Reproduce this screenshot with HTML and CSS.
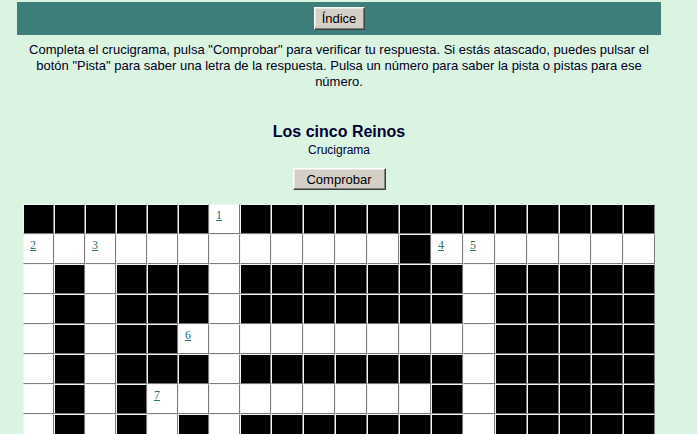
FILE: index.html
```html
<!DOCTYPE html>
<html lang="es">
<head>
<meta charset="utf-8">
<title>Los cinco Reinos</title>
<link rel="stylesheet" href="styles.css">
</head>
<body>
<div class="page">
  <div class="navbar">
    <button class="btn btn-nav" type="button">Índice</button>
  </div>
  <p class="instructions">Completa el crucigrama, pulsa "Comprobar" para verificar tu respuesta. Si estás atascado, puedes pulsar el botón "Pista" para saber una letra de la respuesta. Pulsa un número para saber la pista o pistas para ese número.</p>
  <h2 class="title">Los cinco Reinos</h2>
  <h3 class="subtitle">Crucigrama</h3>
  <div class="actions">
    <button class="btn btn-check" type="button">Comprobar</button>
  </div>
  <table class="grid">
    <colgroup>
      <col class="narrow"><col class="narrow"><col class="narrow"><col class="narrow"><col class="narrow"><col class="narrow"><col class="narrow"><col class="narrow">
      <col class="wide"><col class="wide"><col class="wide"><col class="wide"><col class="wide"><col class="wide"><col class="wide"><col class="wide"><col class="wide"><col class="wide"><col class="wide"><col class="wide">
    </colgroup>
    <tr>
      <td class="b"></td><td class="b"></td><td class="b"></td><td class="b"></td><td class="b"></td><td class="b"></td>
      <td class="w"><a href="#">1</a></td>
      <td class="b"></td><td class="b"></td><td class="b"></td><td class="b"></td><td class="b"></td><td class="b"></td><td class="b"></td><td class="b"></td><td class="b"></td><td class="b"></td><td class="b"></td><td class="b"></td><td class="b"></td>
    </tr>
    <tr>
      <td class="w"><a href="#">2</a></td><td class="w"></td><td class="w"><a href="#">3</a></td>
      <td class="w"></td><td class="w"></td><td class="w"></td><td class="w"></td><td class="w"></td><td class="w"></td><td class="w"></td><td class="w"></td><td class="w"></td>
      <td class="b"></td>
      <td class="w"><a href="#">4</a></td><td class="w"><a href="#">5</a></td>
      <td class="w"></td><td class="w"></td><td class="w"></td><td class="w"></td><td class="w"></td>
    </tr>
    <tr>
      <td class="w"></td><td class="b"></td><td class="w"></td><td class="b"></td><td class="b"></td><td class="b"></td><td class="w"></td>
      <td class="b"></td><td class="b"></td><td class="b"></td><td class="b"></td><td class="b"></td><td class="b"></td><td class="b"></td>
      <td class="w"></td>
      <td class="b"></td><td class="b"></td><td class="b"></td><td class="b"></td><td class="b"></td>
    </tr>
    <tr>
      <td class="w"></td><td class="b"></td><td class="w"></td><td class="b"></td><td class="b"></td><td class="b"></td><td class="w"></td>
      <td class="b"></td><td class="b"></td><td class="b"></td><td class="b"></td><td class="b"></td><td class="b"></td><td class="b"></td>
      <td class="w"></td>
      <td class="b"></td><td class="b"></td><td class="b"></td><td class="b"></td><td class="b"></td>
    </tr>
    <tr>
      <td class="w"></td><td class="b"></td><td class="w"></td><td class="b"></td><td class="b"></td>
      <td class="w"><a href="#">6</a></td>
      <td class="w"></td><td class="w"></td><td class="w"></td><td class="w"></td><td class="w"></td><td class="w"></td><td class="w"></td><td class="w"></td><td class="w"></td>
      <td class="b"></td><td class="b"></td><td class="b"></td><td class="b"></td><td class="b"></td>
    </tr>
    <tr>
      <td class="w"></td><td class="b"></td><td class="w"></td><td class="b"></td><td class="b"></td><td class="b"></td><td class="w"></td>
      <td class="b"></td><td class="b"></td><td class="b"></td><td class="b"></td><td class="b"></td><td class="b"></td><td class="b"></td>
      <td class="w"></td>
      <td class="b"></td><td class="b"></td><td class="b"></td><td class="b"></td><td class="b"></td>
    </tr>
    <tr>
      <td class="w"></td><td class="b"></td><td class="w"></td><td class="b"></td>
      <td class="w"><a href="#">7</a></td>
      <td class="w"></td><td class="w"></td><td class="w"></td><td class="w"></td><td class="w"></td><td class="w"></td><td class="w"></td><td class="w"></td>
      <td class="b"></td>
      <td class="w"></td>
      <td class="b"></td><td class="b"></td><td class="b"></td><td class="b"></td><td class="b"></td>
    </tr>
    <tr>
      <td class="w"></td><td class="b"></td><td class="w"></td><td class="b"></td><td class="w"></td><td class="b"></td><td class="w"></td>
      <td class="b"></td><td class="b"></td><td class="b"></td><td class="b"></td><td class="b"></td><td class="b"></td><td class="b"></td>
      <td class="w"></td>
      <td class="b"></td><td class="b"></td><td class="b"></td><td class="b"></td><td class="b"></td>
    </tr>
    <tr>
      <td class="b"></td><td class="b"></td><td class="b"></td><td class="b"></td><td class="b"></td><td class="b"></td><td class="b"></td>
      <td class="b"></td><td class="b"></td><td class="b"></td><td class="b"></td><td class="b"></td><td class="b"></td><td class="b"></td>
      <td class="b"></td>
      <td class="b"></td><td class="b"></td><td class="b"></td><td class="b"></td><td class="b"></td>
    </tr>
  </table>
</div>
</body>
</html>
```
FILE: styles.css
```css
html, body {
  margin: 0;
  padding: 0;
}

body {
  background-color: #daf4e1;
  font-family: "Liberation Sans", Arial, sans-serif;
  color: #000033;
}

.page {
  width: 644px;
  margin: 0 0 0 17px;
  padding-top: 2px;
}

.navbar {
  background-color: #3f7f7b;
  height: 33px;
  display: flex;
  align-items: center;
  justify-content: center;
}

.btn {
  font-family: "Liberation Sans", Arial, sans-serif;
  font-size: 13px;
  color: #000000;
  background-color: #d4d0c8;
  border: 1px solid;
  border-color: #ffffff #404040 #404040 #ffffff;
  box-shadow: inset -1px -1px 0 #808080, inset 1px 1px 0 #e8e6e0;
  padding: 0;
  margin: 0;
  cursor: pointer;
}

.btn-nav {
  width: 51px;
  height: 23px;
}

.instructions {
  margin: 7px 0 0 0;
  padding: 0 10px;
  font-size: 13px;
  line-height: 16px;
  text-align: center;
  color: #000022;
}

.title {
  margin: 32px 0 0 0;
  font-size: 16px;
  line-height: 19px;
  font-weight: bold;
  text-align: center;
  color: #000033;
}

.subtitle {
  margin: 2px 0 0 0;
  font-size: 12px;
  line-height: 14px;
  font-weight: normal;
  text-align: center;
  color: #000033;
}

.actions {
  display: flex;
  justify-content: center;
  margin-top: 11px;
}

.btn-check {
  width: 93px;
  height: 22px;
}

.grid {
  margin: 14px auto 0 auto;
  width: 632px;
  table-layout: fixed;
  border-collapse: separate;
  border-spacing: 0;
}

.grid col.narrow {
  width: 31px;
}

.grid col.wide {
  width: 32px;
}

.grid td {
  height: 28px;
  padding: 0;
  border: 1px solid;
  border-color: #f4f4f4 #7a7a7a #7a7a7a #f4f4f4;
  vertical-align: top;
  text-align: left;
}

.grid td.b {
  background-color: #000000;
}

.grid td.w {
  background-color: #ffffff;
}

.grid td a {
  display: inline-block;
  margin: 2px 0 0 6px;
  font-family: "Liberation Serif", "Times New Roman", serif;
  font-size: 12px;
  line-height: 13px;
  color: #2f6f6a;
  text-decoration: underline;
}
```
